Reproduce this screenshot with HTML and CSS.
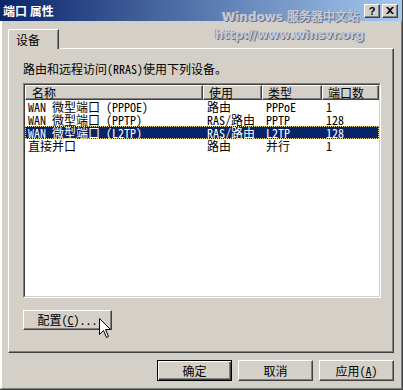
FILE: index.html
```html
<!DOCTYPE html>
<html lang="zh-CN">
<head>
    <meta charset="UTF-8">
    <meta name="viewport" content="width=device-width, initial-scale=1.0">
    <title>端口 属性</title>
    <link rel="stylesheet" href="styles.css">
</head>
<body>
    <div class="window">
        <div class="titlebar">
            <span class="title">端口 属性</span>
            <div class="tb-buttons">
                <span class="tb-btn">?</span>
                <span class="tb-btn">
                    <svg width="8" height="7" viewBox="0 0 8 7"><path d="M0 0h2l2 2 2-2h2L5 3.5 8 7H6L4 5 2 7H0l3-3.5z" fill="#000"/></svg>
                </span>
            </div>
        </div>

        <div class="watermark">
            <div>Windows 服务器中文站</div>
            <div>http://www.winsvr.org</div>
        </div>

        <div class="client">
            <div class="tabs">
                <div class="tab active">设备</div>
            </div>
            <div class="panel">
                <p class="intro">路由和远程访问(RRAS)使用下列设备。</p>
                <div class="listview">
                    <div class="list-inner">
                        <div class="row head">
                            <div class="cell">名称</div>
                            <div class="cell">使用</div>
                            <div class="cell">类型</div>
                            <div class="cell">端口数</div>
                        </div>
                        <div class="row">
                            <div class="cell">WAN 微型端口 (PPPOE)</div>
                            <div class="cell">路由</div>
                            <div class="cell">PPPoE</div>
                            <div class="cell">1</div>
                        </div>
                        <div class="row">
                            <div class="cell">WAN 微型端口 (PPTP)</div>
                            <div class="cell">RAS/路由</div>
                            <div class="cell">PPTP</div>
                            <div class="cell">128</div>
                        </div>
                        <div class="row selected">
                            <div class="cell">WAN 微型端口 (L2TP)</div>
                            <div class="cell">RAS/路由</div>
                            <div class="cell">L2TP</div>
                            <div class="cell">128</div>
                        </div>
                        <div class="row">
                            <div class="cell">直接并口</div>
                            <div class="cell">路由</div>
                            <div class="cell">并行</div>
                            <div class="cell">1</div>
                        </div>
                    </div>
                </div>
                <div class="cfg-wrap">
                    <button class="btn cfg">配置(<u>C</u>)...</button>
                    <svg class="cursor" width="12" height="20" viewBox="0 0 12 20">
                        <path d="M0.5 0.5V16.5L4.5 12.5L7.5 19.5L9.5 18.5L6.5 11.5H11.5Z" fill="#fff" stroke="#000" stroke-width="1"/>
                    </svg>
                </div>
            </div>
            <div class="actions">
                <button class="btn default">确定</button>
                <button class="btn">取消</button>
                <button class="btn">应用(<u>A</u>)</button>
            </div>
        </div>
    </div>
</body>
</html>
```

FILE: styles.css
```css
* {
    box-sizing: border-box;
}
body {
    margin: 0;
    background: #d4d0c8;
    font-family: "Noto Sans Mono CJK SC", "Noto Sans CJK SC", monospace;
    font-size: 12px;
    color: #000;
}
.window {
    position: relative;
    width: 403px;
    height: 390px;
    display: flex;
    flex-direction: column;
    background: #d4d0c8;
    border-right: 1px solid #404040;
    border-bottom: 1px solid #404040;
}
.titlebar {
    height: 21px;
    flex: none;
    display: flex;
    align-items: center;
    justify-content: space-between;
    padding: 0 4px 0 3px;
    background: linear-gradient(to right, #0a246a, #a6caf0);
}
.title {
    color: #fff;
    font-weight: bold;
    font-family: "Noto Sans CJK SC", sans-serif;
    line-height: 14px;
}
.tb-buttons {
    display: flex;
    gap: 2px;
}
.tb-btn {
    width: 16px;
    height: 14px;
    display: flex;
    align-items: center;
    justify-content: center;
    background: #d4d0c8;
    border: 1px solid;
    border-color: #fff #404040 #404040 #fff;
    box-shadow: inset -1px -1px #808080;
    font-family: "Liberation Sans", sans-serif;
    font-weight: bold;
    font-size: 11px;
    line-height: 12px;
}
.watermark {
    position: absolute;
    left: 222px;
    top: 8px;
    font-family: "DejaVu Sans", sans-serif;
    font-weight: bold;
    font-size: 12px;
    line-height: 18px;
    color: #c4cad6;
    text-shadow: 1px 1px 0 #6c7284, -1px 0 0 #9aa0b0;
    pointer-events: none;
}
.watermark div:last-child {
    margin-left: -7px;
}
.client {
    flex: 1;
    display: flex;
    flex-direction: column;
    padding: 8px 7px 7px 6px;
    border-left: 2px solid #fff;
    border-right: 1px solid #808080;
    border-bottom: 1px solid #808080;
}
.tabs {
    display: flex;
    position: relative;
    z-index: 1;
    margin-bottom: -1px;
}
.tab {
    width: 51px;
    height: 20px;
    padding: 3px 0 0 7px;
    line-height: 14px;
    background: #d4d0c8;
    border-top: 1px solid #fff;
    border-left: 1px solid #fff;
    border-right: 1px solid #404040;
    border-top-left-radius: 2px;
    box-shadow: inset -1px 0 #808080;
}
.panel {
    height: 305px;
    display: flex;
    flex-direction: column;
    padding: 13px 12px 0 14px;
    border-top: 1px solid #fff;
    border-left: 1px solid #fff;
    border-right: 1px solid #404040;
    border-bottom: 1px solid #404040;
    box-shadow: inset -1px -1px #808080;
}
.intro {
    margin: 0;
    line-height: 14px;
}
.listview {
    margin-top: 7px;
    height: 215px;
    border: 1px solid;
    border-color: #808080 #fff #fff #808080;
}
.list-inner {
    height: 100%;
    background: #fff;
    border: 1px solid;
    border-color: #404040 #d4d0c8 #d4d0c8 #404040;
}
.row {
    display: grid;
    grid-template-columns: 178px 59px 60px 1fr;
    height: 13px;
    line-height: 13px;
    white-space: nowrap;
}
.row .cell {
    padding-left: 4px;
}
.row .cell:first-child {
    padding-left: 3px;
}
.row.head {
    height: 15px;
}
.row.head .cell {
    padding: 1px 0 0 5px;
    background: #d4d0c8;
    border-top: 1px solid #fff;
    border-left: 1px solid #fff;
    border-right: 1px solid #404040;
    border-bottom: 1px solid #404040;
    box-shadow: inset -1px -1px #808080;
    line-height: 12px;
}
.row.head .cell:first-child {
    padding-left: 6px;
}
.row.selected {
    background: #0a246a;
    color: #fff;
    outline: 1px dotted #e8e0a0;
    outline-offset: -1px;
}
.cfg-wrap {
    position: relative;
    margin-top: 12px;
}
.btn {
    height: 21px;
    width: 75px;
    padding: 0;
    background: #d4d0c8;
    font: inherit;
    line-height: 14px;
    color: #000;
    border: 1px solid;
    border-color: #fff #404040 #404040 #fff;
    box-shadow: inset -1px -1px #808080;
}
.btn.cfg {
    width: 89px;
    height: 20px;
}
.btn.default {
    border-color: #000;
    box-shadow: inset 1px 1px #fff, inset -1px -1px #404040, inset -2px -2px #808080;
}
.cursor {
    position: absolute;
    left: 76px;
    top: 8px;
}
.actions {
    display: flex;
    justify-content: flex-end;
    gap: 6px;
    margin-top: 7px;
}
```
